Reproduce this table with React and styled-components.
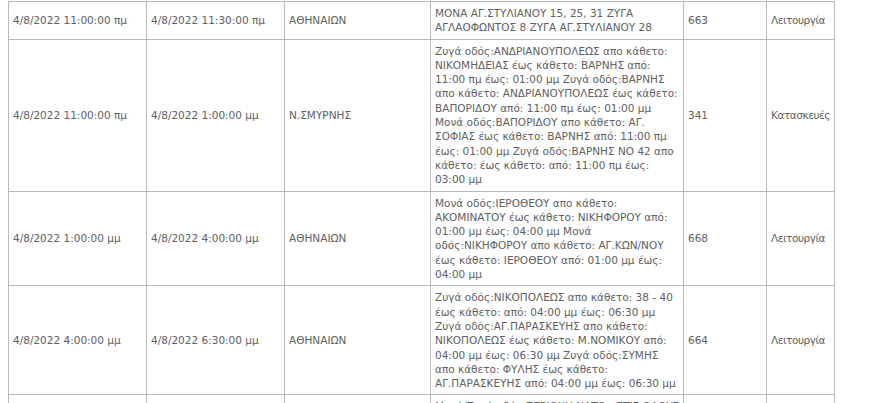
import React from 'react';
import styled, {createGlobalStyle} from 'styled-components';

const rows = [
  {
    from: '4/8/2022 11:00:00 πμ',
    to: '4/8/2022 11:30:00 πμ',
    area: 'ΑΘΗΝΑΙΩΝ',
    streets: 'ΜΟΝΑ ΑΓ.ΣΤΥΛΙΑΝΟΥ 15, 25, 31 ΖΥΓΑ ΑΓΛΑΟΦΩΝΤΟΣ 8 ΖΥΓΑ ΑΓ.ΣΤΥΛΙΑΝΟΥ 28',
    code: '663',
    reason: 'Λειτουργία',
  },
  {
    from: '4/8/2022 11:00:00 πμ',
    to: '4/8/2022 1:00:00 μμ',
    area: 'Ν.ΣΜΥΡΝΗΣ',
    streets:
      'Ζυγά οδός:ΑΝΔΡΙΑΝΟΥΠΟΛΕΩΣ απο κάθετο: ΝΙΚΟΜΗΔΕΙΑΣ έως κάθετο: ΒΑΡΝΗΣ από: 11:00 πμ έως: 01:00 μμ Ζυγά οδός:ΒΑΡΝΗΣ απο κάθετο: ΑΝΔΡΙΑΝΟΥΠΟΛΕΩΣ έως κάθετο: ΒΑΠΟΡΙΔΟΥ από: 11:00 πμ έως: 01:00 μμ Μονά οδός:ΒΑΠΟΡΙΔΟΥ απο κάθετο: ΑΓ. ΣΟΦΙΑΣ έως κάθετο: ΒΑΡΝΗΣ από: 11:00 πμ έως: 01:00 μμ Ζυγά οδός:ΒΑΡΝΗΣ ΝΟ 42 απο κάθετο: έως κάθετο: από: 11:00 πμ έως: 03:00 μμ',
    code: '341',
    reason: 'Κατασκευές',
  },
  {
    from: '4/8/2022 1:00:00 μμ',
    to: '4/8/2022 4:00:00 μμ',
    area: 'ΑΘΗΝΑΙΩΝ',
    streets:
      'Μονά οδός:ΙΕΡΟΘΕΟΥ απο κάθετο: ΑΚΟΜΙΝΑΤΟΥ έως κάθετο: ΝΙΚΗΦΟΡΟΥ από: 01:00 μμ έως: 04:00 μμ Μονά οδός:ΝΙΚΗΦΟΡΟΥ απο κάθετο: ΑΓ.ΚΩΝ/ΝΟΥ έως κάθετο: ΙΕΡΟΘΕΟΥ από: 01:00 μμ έως: 04:00 μμ',
    code: '668',
    reason: 'Λειτουργία',
  },
  {
    from: '4/8/2022 4:00:00 μμ',
    to: '4/8/2022 6:30:00 μμ',
    area: 'ΑΘΗΝΑΙΩΝ',
    streets:
      'Ζυγά οδός:ΝΙΚΟΠΟΛΕΩΣ απο κάθετο: 38 - 40 έως κάθετο: από: 04:00 μμ έως: 06:30 μμ Ζυγά οδός:ΑΓ.ΠΑΡΑΣΚΕΥΗΣ απο κάθετο: ΝΙΚΟΠΟΛΕΩΣ έως κάθετο: Μ.ΝΟΜΙΚΟΥ από: 04:00 μμ έως: 06:30 μμ Ζυγά οδός:ΣΥΜΗΣ απο κάθετο: ΦΥΛΗΣ έως κάθετο: ΑΓ.ΠΑΡΑΣΚΕΥΗΣ από: 04:00 μμ έως: 06:30 μμ',
    code: '664',
    reason: 'Λειτουργία',
  },
  {
    from: '4/8/2022 4:00:00 μμ',
    to: '4/8/2022 7:00:00 μμ',
    area: 'ΑΓ.ΠΑΡΑΣΚΕΥΗΣ',
    streets:
      'Μονά/Ζυγά οδός:ΠΕΡΙΟΧΗ ΝΑΤΟ - ΣΤΙΣ ΟΔΟΥΣ απο κάθετο: έως κάθετο: από: 04:00 μμ έως: 07:00 μμ Ζυγά οδός:ΜΕΣΟΓΕΙΩΝ απο κάθετο: ΑΓ.ΙΩΑΝΝΟΥ έως κάθετο: ΕΘΝ.ΑΝΤΙΣΤΑΣΕΩΣ από: 04:00 μμ έως: 07:00 μμ Μονά οδός:ΚΑΝΑΡΗ απο κάθετο: ΠΑΠΑΦΛΕΣΣΑ έως κάθετο: ΜΕΣΟΓΕΙΩΝ από: 04:00 μμ έως: 07:00 μμ',
    code: '620',
    reason: 'Λειτουργία',
  },
];

const widths = [138, 138, 146, 253, 83, 68];

class App extends React.Component {
  render() {
    return (
      <>
        <Global />
        <Page>
          <Table>
            <colgroup>
              {widths.map((w, i) => <col key={i} style={{width: w}} />)}
            </colgroup>
            <tbody>
              {rows.map((r, i) => (
                <tr key={i}>
                  <Cell>{r.from}</Cell>
                  <Cell>{r.to}</Cell>
                  <Cell>{r.area}</Cell>
                  <Cell wrap>{r.streets}</Cell>
                  <Cell>{r.code}</Cell>
                  <Cell tight>{r.reason}</Cell>
                </tr>
              ))}
            </tbody>
          </Table>
        </Page>
      </>
    );
  }
}

const Global = createGlobalStyle`
  html, body {
    margin: 0;
    overflow: hidden;
    background: #fff;
  }
`

const Page = styled.div`
  padding: 1px 8px 0;
`

const Table = styled.table`
  width: 826px;
  table-layout: fixed;
  border-collapse: collapse;
  font-family: 'DejaVu Sans', Verdana, sans-serif;
  font-size: 10.5px;
  line-height: 14.3px;
  color: #606060;
`

const Cell = styled.td.withConfig({shouldForwardProp: p => p !== 'wrap' && p !== 'tight'})`
  border: 1px solid #b8b8b8;
  padding: 4px 2px 4px 4px;
  vertical-align: middle;
  white-space: ${p => (p.wrap ? 'normal' : 'nowrap')};
  letter-spacing: ${p => (p.tight ? '-0.45px' : 'normal')};
  overflow: hidden;
`

export default App;
